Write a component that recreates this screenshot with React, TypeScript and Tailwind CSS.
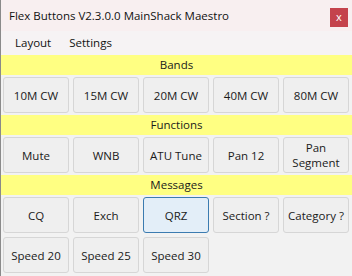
const bands = ["10M CW", "15M CW", "20M CW", "40M CW", "80M CW"];
const functions = ["Mute", "WNB", "ATU Tune", "Pan 12", "Pan\nSegment"];
const messages = ["CQ", "Exch", "QRZ", "Section ?", "Category ?"];
const speeds = ["Speed 20", "Speed 25", "Speed 30"];

function Btn({ label, focused }: { label: string; focused?: boolean }) {
  return (
    <button
      className={
        "h-[36px] w-[66px] rounded-[3px] border text-[11.5px] leading-[15px] text-[#1a1a1a] whitespace-pre-line " +
        (focused ? "border-[#3b7bb0] bg-[#e3eef8]" : "border-[#d6d6d6] bg-[#efefef]")
      }
    >
      {label}
    </button>
  );
}

function Header({ title }: { title: string }) {
  return (
    <div className="h-[20px] bg-[#ffff82] flex items-center justify-center text-[11.5px] text-[#1a1a1a]">
      {title}
    </div>
  );
}

export default function App() {
  return (
    <main
      className="w-[352px] h-[276px] overflow-hidden bg-[#f2f2f2] border-l border-[#8a8a8a] flex flex-col"
      style={{ fontFamily: '"Open Sans", "Noto Sans", sans-serif' }}
    >
      {/* title bar */}
      <div className="h-[31px] bg-[#f8eff0] flex items-center justify-between pl-[8px] pr-[4px]">
        <span className="text-[11.5px] text-[#111]">Flex Buttons V2.3.0.0 MainShack Maestro</span>
        <div className="w-[18px] h-[19px] mt-[4px] bg-[#c4434c] flex items-center justify-center text-white text-[11px] leading-none pb-[2px]">
          x
        </div>
      </div>

      {/* menu */}
      <div className="h-[24px] bg-[#f6f3f4] flex items-center gap-[18px] pl-[14px] text-[11.5px] text-[#111]">
        <span>Layout</span>
        <span>Settings</span>
      </div>

      <Header title="Bands" />
      <div className="flex gap-[4px] px-[2px] py-[2px]">
        {bands.map((b) => (
          <Btn key={b} label={b} />
        ))}
      </div>

      <Header title="Functions" />
      <div className="flex gap-[4px] px-[2px] py-[2px]">
        {functions.map((b) => (
          <Btn key={b} label={b} />
        ))}
      </div>

      <Header title="Messages" />
      <div className="flex flex-col gap-[4px] px-[2px] pt-[2px]">
        <div className="flex gap-[4px]">
          {messages.map((b) => (
            <Btn key={b} label={b} focused={b === "QRZ"} />
          ))}
        </div>
        <div className="flex gap-[4px]">
          {speeds.map((b) => (
            <Btn key={b} label={b} />
          ))}
        </div>
      </div>
    </main>
  );
}
